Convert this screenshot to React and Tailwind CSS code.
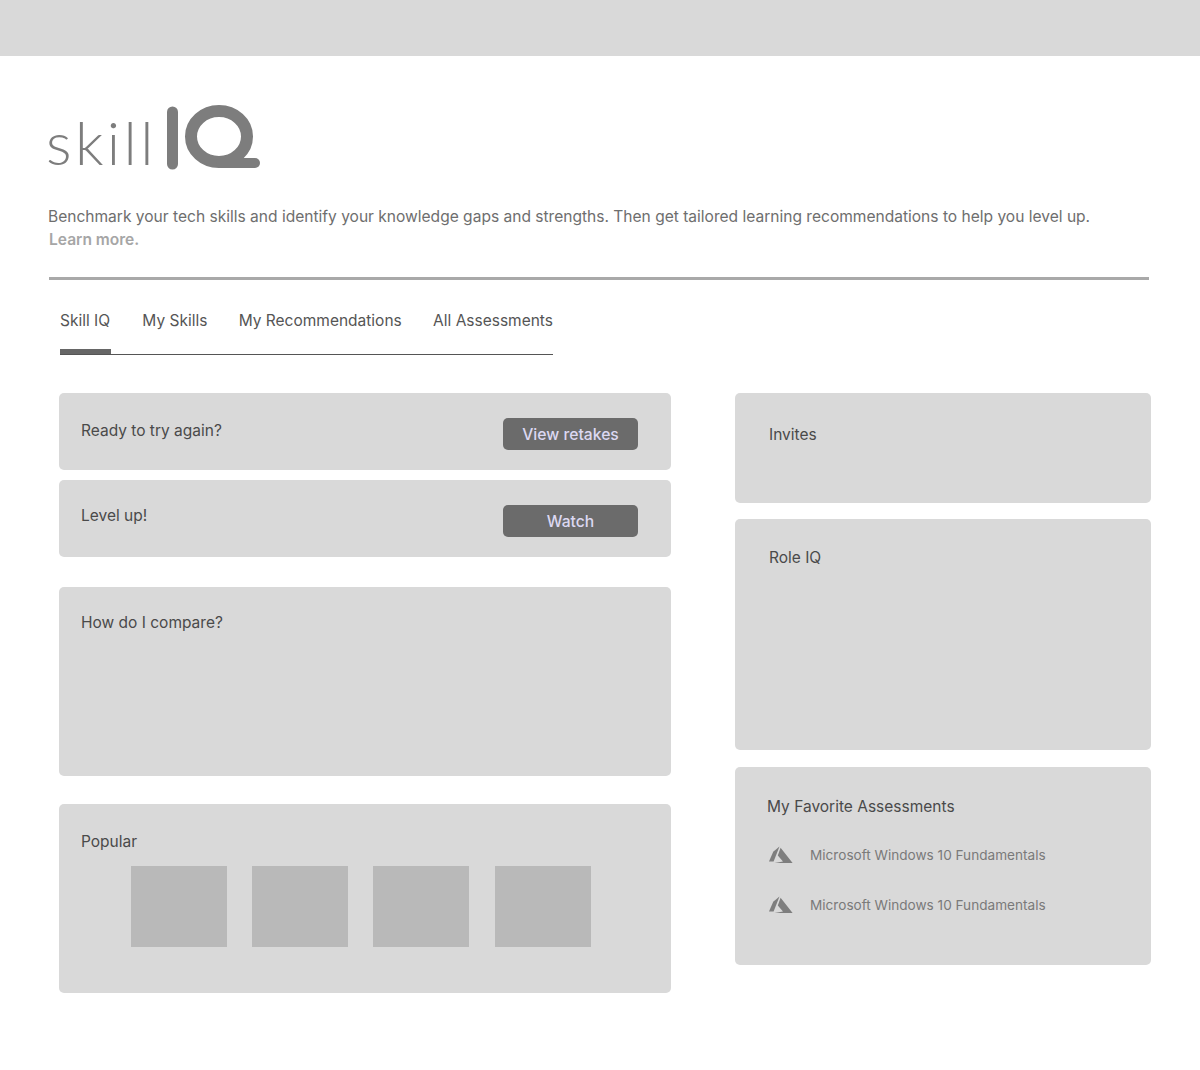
import React from 'react';

const font = { fontFamily: 'Inter, "Noto Sans", sans-serif' };

function AzureIcon() {
  return (
    <svg width="24" height="18" viewBox="0 0 24 18" className="shrink-0">
      <path d="M10.5 0.5 L4.2 5.8 L0 15.5 H4.6 Z" fill="#7e7e7e" />
      <path d="M11.6 1.8 L8.8 9.4 L14 15.6 L5.6 17 H23.6 Z" fill="#7e7e7e" />
    </svg>
  );
}

function LogoMark() {
  return (
    <svg width="94" height="66" viewBox="0 0 94 66" className="shrink-0">
      <line x1="5.5" y1="7" x2="5.5" y2="59" stroke="#7d7d7d" strokeWidth="11" strokeLinecap="round" />
      <ellipse cx="52" cy="31.5" rx="28" ry="25.5" fill="none" stroke="#7d7d7d" strokeWidth="12" />
      <line x1="54" y1="58" x2="88" y2="58" stroke="#7d7d7d" strokeWidth="10" strokeLinecap="round" />
    </svg>
  );
}

function Card({ title, className, children }) {
  return (
    <div className={`rounded-[5px] bg-[#d9d9d9] ${className}`}>
      {title && <h3 className="text-[15.5px] leading-6 font-normal text-[#4a4a4a]">{title}</h3>}
      {children}
    </div>
  );
}

function CtaCard({ title, action, className, titleClass }) {
  return (
    <div className={`flex justify-between rounded-[5px] bg-[#d9d9d9] pl-[22px] pr-[33px] ${className}`}>
      <h3 className={`text-[15.5px] leading-6 font-normal text-[#4a4a4a] ${titleClass}`}>{title}</h3>
      <button className="mt-[25px] h-8 w-[135px] rounded-[5px] bg-[#6b6b6b] pt-px text-[15.7px] font-medium text-[#dcd8f2]">{action}</button>
    </div>
  );
}

export default function App() {
  const tabs = ['Skill IQ', 'My Skills', 'My Recommendations', 'All Assessments'];
  return (
    <div className="min-h-[1070px] bg-white" style={font}>
      <div className="h-14 bg-[#d9d9d9]" />

      <header className="pl-12 pr-[51px] pt-[49px]">
        <div className="flex h-[66px] items-end">
          <span className="-ml-0.5 mb-[-3px] w-[121px] shrink-0 text-[60px] leading-[64px] font-light tracking-[3.4px] text-[#7d7d7d]" style={{ fontFamily: 'Lato, sans-serif' }}>skill</span>
          <LogoMark />
        </div>
        <p className="mt-[34px] text-[15.55px] leading-[23px] text-[#6e6e6e]">
          Benchmark your tech skills and identify your knowledge gaps and strengths. Then get tailored learning recommendations to help you level up.
          <br />
          <a className="pl-px font-semibold text-[#a6a6a6]">Learn more.</a>
        </p>
        <div className="mt-[26px] ml-px h-[3px] bg-[#a9a9a9]" />
      </header>

      <nav className="ml-[60px] mt-[29px] flex w-[493px] justify-between border-b border-[#555555]">
        {tabs.map((tab, i) => (
          <div key={tab} className={`h-[45px] text-[15.5px] leading-6 text-[#555555] ${i === 0 ? '-mb-px w-[51px] border-b-[5px] border-[#666666]' : ''}`}>{tab}</div>
        ))}
      </nav>

      <main className="ml-[59px] mt-[38px] flex gap-16">
        <div className="flex w-[612px] flex-col">
          <CtaCard title="Ready to try again?" action="View retakes" className="h-[77px]" titleClass="pt-[26px]" />
          <CtaCard title="Level up!" action="Watch" className="mt-2.5 h-[77px]" titleClass="pt-6" />
          <Card title="How do I compare?" className="mt-[30px] h-[189px] px-[22px] pt-6" />
          <Card title="Popular" className="mt-7 h-[189px] px-[22px] pt-[26px]">
            <div className="mt-3 ml-[50px] flex gap-[25.2px]">
              {[0, 1, 2, 3].map((n) => (
                <div key={n} className="h-[81px] w-24 bg-[#b9b9b9]" />
              ))}
            </div>
          </Card>
        </div>

        <div className="flex w-[416px] flex-col">
          <Card title="Invites" className="h-[110px] px-[34px] pt-[30px]" />
          <Card title="Role IQ" className="mt-4 h-[231px] px-[34px] pt-[27px]" />
          <Card className="mt-[17px] h-[198px] pl-8 pt-[28px]">
            <h3 className="text-[15.5px] leading-6 font-normal text-[#4a4a4a]">My Favorite Assessments</h3>
            <ul className="mt-[27px] space-y-[32px]">
              {[0, 1].map((n) => (
                <li key={n} className="flex h-[18px] items-center gap-[17px] pl-0.5 text-[13.6px] text-[#7a7a7a]">
                  <AzureIcon />
                  Microsoft Windows 10 Fundamentals
                </li>
              ))}
            </ul>
          </Card>
        </div>
      </main>
    </div>
  );
}
